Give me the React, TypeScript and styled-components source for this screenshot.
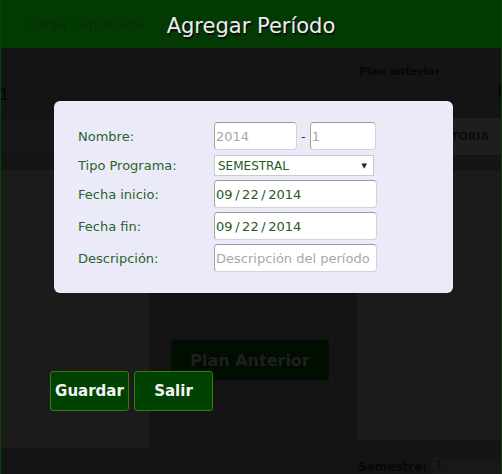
import styled, { createGlobalStyle } from "styled-components";

const Global = createGlobalStyle`
    html, body {
        margin: 0;
        padding: 0;
        background: #141414;
        font-family: "DejaVu Sans", Tahoma, sans-serif;
    }
`;

const Page = styled.div`
    position: relative;
    width: 502px;
    height: 474px;
    box-sizing: border-box;
    border-left: 1px solid #0b3f0b;
    border-right: 1px solid #0b3f0b;
    background: #141414;
    overflow: hidden;
    display: flex;
    flex-direction: column;
`;

const Header = styled.div`
    height: 48px;
    flex: none;
    background: #033a03;
    display: flex;
    align-items: center;
    padding-left: 23px;
`;

const Faint = styled.span<{ $size?: number; $color?: string; $bold?: boolean }>`
    font-size: ${(p) => p.$size ?? 12}px;
    color: ${(p) => p.$color ?? "#0a0a0a"};
    font-weight: ${(p) => (p.$bold ? "bold" : "normal")};
    white-space: nowrap;
`;

const TopRow = styled.div`
    height: 70px;
    flex: none;
    display: grid;
    grid-template-columns: 356px 1fr;
`;

const TopLeft = styled.div`
    display: flex;
    align-items: flex-end;
    padding-bottom: 14px;
    margin-left: -2px;
`;

const TopRight = styled.div`
    display: flex;
    flex-direction: column;
    padding-top: 17px;
    padding-left: 2px;
    gap: 4px;
`;

const TabRow = styled.div`
    height: 37px;
    flex: none;
    display: grid;
    grid-template-columns: 356px 1fr;
`;

const TabCell = styled.div<{ $shade: string }>`
    background: ${(p) => p.$shade};
    display: flex;
    align-items: center;
    justify-content: flex-end;
    padding-right: 12px;
`;

const Body = styled.div`
    height: 293px;
    flex: none;
    display: grid;
    grid-template-columns: 149px 207px 1fr;
    padding-top: 15px;
    box-sizing: border-box;
`;

const SidePanel = styled.div<{ $bottom: number }>`
    background: #1b1b1b;
    margin-bottom: ${(p) => p.$bottom}px;
    border: 1px solid #1c1915;
`;

const Middle = styled.div`
    display: flex;
    justify-content: center;
    align-items: flex-start;
    padding-top: 170px;
    padding-right: 7px;
`;

const GhostButton = styled.div`
    width: 158px;
    height: 40px;
    border-radius: 3px;
    background: #010d01;
    color: #1f1f1f;
    font-weight: bold;
    font-size: 16px;
    display: flex;
    align-items: center;
    justify-content: center;
`;

const Bottom = styled.div`
    flex: 1;
    display: flex;
    align-items: flex-end;
    padding-left: 357px;
    gap: 4px;
`;

const BottomInput = styled.div`
    flex: 1;
    height: 16px;
    background: #181818;
    padding-left: 4px;
    font-size: 12px;
    color: #0c0c0c;
`;

const Title = styled.h1`
    position: absolute;
    top: 14px;
    left: 0;
    right: 0;
    margin: 0;
    text-align: center;
    font-size: 21px;
    font-weight: normal;
    color: #eeeeee;
    text-shadow: 1px 2px 1px #0b0b0b;
`;

const Dialog = styled.div`
    position: absolute;
    left: 53px;
    top: 101px;
    width: 399px;
    height: 192px;
    box-sizing: border-box;
    background: #ebeaf8;
    border-radius: 6px;
    padding: 21px 0 0 24px;
`;

const Form = styled.div`
    display: grid;
    grid-template-columns: 136px auto;
    row-gap: 4px;
    align-items: center;
`;

const Label = styled.label`
    font-size: 13px;
    color: #2b622b;
`;

const Field = styled.div`
    display: flex;
    align-items: center;
    gap: 4px;
`;

const Input = styled.div<{ $width: number; $muted?: boolean }>`
    width: ${(p) => p.$width}px;
    height: 28px;
    box-sizing: border-box;
    background: #ffffff;
    border: 1px solid #d2d2d8;
    border-top-color: #9a9a9a;
    border-left-color: #a4a4a4;
    border-radius: 4px;
    padding-left: 1px;
    display: flex;
    align-items: center;
    font-size: 13px;
    color: ${(p) => (p.$muted ? "#a8a8a8" : "#1f5a1f")};
    white-space: nowrap;
    overflow: hidden;
`;

const Select = styled.div`
    width: 160px;
    height: 21px;
    margin-top: 1px;
    box-sizing: border-box;
    background: #ffffff;
    border: 1px solid #c9c9cf;
    padding: 0 6px 0 3px;
    display: flex;
    align-items: center;
    justify-content: space-between;
    font-size: 12px;
    color: #1f5a1f;
`;

const Arrow = styled.span`
    font-size: 7px;
    color: #222;
`;

const Dash = styled.span`
    font-size: 13px;
    color: #333;
`;

const Actions = styled.div`
    position: absolute;
    left: 49px;
    top: 371px;
    display: flex;
    gap: 5px;
`;

const Button = styled.button`
    width: 79px;
    height: 40px;
    background: #004300;
    border: 1px solid #3a7d0a;
    border-radius: 3px;
    color: #f4f4f4;
    font-family: inherit;
    font-weight: bold;
    font-size: 15px;
    padding: 0;
`;

const date = "09\u2009/\u200922\u2009/\u20092014";

export default function App() {
    return (
        <>
            <Global />
            <Page>
                <Header>
                    <Faint $size={14.5} $color="#023102">Carga capturada</Faint>
                </Header>
                <TopRow>
                    <TopLeft>
                        <Faint $size={16} $color="#050505">1</Faint>
                    </TopLeft>
                    <TopRight>
                        <Faint $size={11} $color="#070707" $bold>Plan anterior</Faint>
                        <Faint $size={16} $color="#050505" style={{ alignSelf: "flex-end", marginRight: -6 }}>P</Faint>
                    </TopRight>
                </TopRow>
                <TabRow>
                    <TabCell $shade="#161616" />
                    <TabCell $shade="#1e1e1e">
                        <Faint $size={11} $color="#0c0c0c" $bold>CARGA OBLIGATORIA</Faint>
                    </TabCell>
                </TabRow>
                <Body>
                    <SidePanel $bottom={0} />
                    <Middle>
                        <GhostButton>Plan Anterior</GhostButton>
                    </Middle>
                    <SidePanel $bottom={8} />
                </Body>
                <Bottom>
                    <Faint $size={12} $color="#070707" $bold>Semestre:</Faint>
                    <BottomInput>1</BottomInput>
                </Bottom>

                <Title>Agregar Período</Title>

                <Dialog>
                    <Form>
                        <Label>Nombre:</Label>
                        <Field>
                            <Input $width={83} $muted>2014</Input>
                            <Dash>-</Dash>
                            <Input $width={66} $muted>1</Input>
                        </Field>
                        <Label>Tipo Programa:</Label>
                        <Select>
                            SEMESTRAL
                            <Arrow>▼</Arrow>
                        </Select>
                        <Label>Fecha inicio:</Label>
                        <Input $width={163}>{date}</Input>
                        <Label>Fecha fin:</Label>
                        <Input $width={163}>{date}</Input>
                        <Label>Descripción:</Label>
                        <Input $width={163} $muted>Descripción del período</Input>
                    </Form>
                </Dialog>

                <Actions>
                    <Button>Guardar</Button>
                    <Button>Salir</Button>
                </Actions>
            </Page>
        </>
    );
}
